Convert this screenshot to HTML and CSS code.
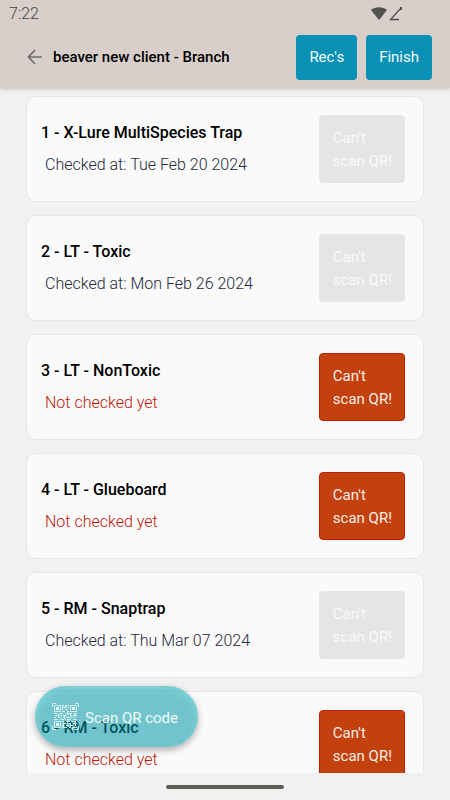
FILE: index.html
```html
<!DOCTYPE html>
<html lang="en">
<head>
<meta charset="utf-8">
<meta name="viewport" content="width=device-width, initial-scale=1">
<title>beaver new client - Branch</title>
<link rel="stylesheet" href="styles.css">
</head>
<body>
<header class="top">
  <div class="status">
    <span class="clock">7:22</span>
    <svg class="signals" width="34" height="16" viewBox="0 0 34 16" aria-hidden="true">
      <path d="M0 4C4 .2 12 .2 16 4L8 14Z" fill="#53514d"/>
      <path d="M29 3 19.500 13.500H28" fill="none" stroke="#53514d" stroke-width="1.300"/>
      <path d="M29 1h2v3h-2z" fill="#53514d"/>
    </svg>
  </div>
  <div class="bar">
    <a class="back" href="#" aria-label="Back">
      <svg width="16" height="16" viewBox="0 0 16 16" aria-hidden="true"><path d="M8 1 1.500 8 8 15M1.500 8H15" fill="none" stroke="#6b6d6b" stroke-width="1.700"/></svg>
    </a>
    <h1 class="title">beaver new client - Branch</h1>
    <button class="action" type="button">Rec's</button>
    <button class="action" type="button">Finish</button>
  </div>
</header>
<main class="list">
  <article class="card">
    <div class="info"><h2 class="name">1 - X-Lure MultiSpecies Trap</h2><p class="state">Checked at: Tue Feb 20 2024</p></div>
    <button class="cant" type="button" disabled>Can't<br>scan QR!</button>
  </article>
  <article class="card">
    <div class="info"><h2 class="name">2 - LT - Toxic</h2><p class="state">Checked at: Mon Feb 26 2024</p></div>
    <button class="cant" type="button" disabled>Can't<br>scan QR!</button>
  </article>
  <article class="card">
    <div class="info"><h2 class="name">3 - LT - NonToxic</h2><p class="state pending">Not checked yet</p></div>
    <button class="cant" type="button">Can't<br>scan QR!</button>
  </article>
  <article class="card">
    <div class="info"><h2 class="name">4 - LT - Glueboard</h2><p class="state pending">Not checked yet</p></div>
    <button class="cant" type="button">Can't<br>scan QR!</button>
  </article>
  <article class="card">
    <div class="info"><h2 class="name">5 - RM - Snaptrap</h2><p class="state">Checked at: Thu Mar 07 2024</p></div>
    <button class="cant" type="button" disabled>Can't<br>scan QR!</button>
  </article>
  <article class="card">
    <div class="info"><h2 class="name">6 - RM - Toxic</h2><p class="state pending">Not checked yet</p></div>
    <button class="cant" type="button">Can't<br>scan QR!</button>
  </article>
</main>
<footer class="gesture"><span class="handle"></span></footer>
<button class="scan" type="button">
  <svg width="27" height="27" viewBox="0 0 27 27" aria-hidden="true">
    <g fill="none" stroke="#e6f6f7" stroke-opacity=".85">
      <path d="M.5 4V.5H4M23 .5h3.500V4M26.500 23v3.500H23M4 26.500H.5V23"/>
      <path d="M2.500 2.500h6v6h-6zM18.500 2.500h6v6h-6zM2.500 18.500h6v6h-6z"/>
      <path d="M10 2.500h2m2 0h3M11 4.500h4m1 0h1M10 6.500h1m2 0h3M10 8.500h3m2 0h2M2 10.500h3m2 0h4m2 0h1m2 0h4m2 0h3M3 12.500h4m1 0h2m1 0h4m3 0h2m1 0h4M2 14.500h2m2 0h3m2 0h2m1 0h4m1 0h2m2 0h1M2 16.500h4m2 0h4m1 0h1m2 0h3m2 0h4M10 18.500h2m2 0h4m1 0h2m1 0h2M11 20.500h4m2 0h2m2 0h4M10 22.500h2m2 0h3m1 0h3m2 0h1M10 24.500h5m2 0h2m2 0h4"/>
      <path d="M10.500 3v4m3-5v3m2 3v4m-3 0v4m-6-5v3m12-3v3m4-3v3m-7 2v4m-4 0v4m7-3v3m5-5v4m-3 1v3"/>
    </g>
    <path d="M4 4h3v3H4zM20 4h3v3h-3zM4 20h3v3H4z" fill="#e6f6f7"/>
  </svg>
  <span class="label">Scan QR code</span>
</button>
</body>
</html>
```

FILE: styles.css
```css
* {
  box-sizing: border-box;
}

body {
  margin: 0;
  height: 100vh;
  display: flex;
  flex-direction: column;
  overflow: hidden;
  background: #f2f1ef;
  color: #000;
  font: 16px/24px Roboto, sans-serif;
}

h1,
h2,
p {
  margin: 0;
}

button {
  font: inherit;
  font-size: 15px;
  cursor: pointer;
}

.top {
  flex: none;
  position: relative;
  background: #d8ceca;
  box-shadow: 0 1px 4px rgba(0, 0, 0, 0.2);
}

.status {
  display: flex;
  align-items: center;
  justify-content: space-between;
  height: 28px;
  padding: 0 45px 0 9px;
}

.clock {
  color: #474543;
  font-weight: 300;
}

.bar {
  display: flex;
  align-items: center;
  gap: 9px;
  height: 60px;
  padding: 0 18px 2px 27px;
}

.back {
  display: flex;
}

.title {
  flex: 1;
  padding-left: 1px;
  font-size: 15px;
  font-weight: 500;
}

.action {
  height: 45px;
  padding: 0 13px;
  border: 0;
  border-radius: 4px;
  background: #0891b5;
  color: #f5fbfc;
}

.list {
  flex: 1;
  min-height: 0;
  overflow: hidden;
  display: flex;
  flex-direction: column;
  gap: 13px;
  padding: 8px 26px 0;
}

.card {
  flex: none;
  display: flex;
  align-items: center;
  justify-content: space-between;
  padding: 18px;
  padding-left: 14px;
  border: 1px solid #e5e7eb;
  border-radius: 10px;
  background: #fafafa;
}

.name {
  font-size: 16px;
  font-weight: 500;
}

.state {
  padding: 8px 4px 0;
  color: #1e293b;
  font-weight: 300;
}

.pending {
  color: #c01808;
}

.cant {
  padding: 11px 12px 9px 13px;
  border: 1px solid #be2006;
  border-radius: 4px;
  background: #c2410c;
  color: #fbeee9;
  line-height: 23px;
  text-align: left;
}

.cant:disabled {
  border-color: #e6e5e3;
  background: #e6e5e3;
  color: #fafafa;
}

.gesture {
  flex: none;
  display: flex;
  align-items: center;
  justify-content: center;
  height: 27px;
}

.handle {
  width: 118px;
  height: 4px;
  border-radius: 2px;
  background: #5c5c59;
}

.scan {
  position: absolute;
  left: 35px;
  bottom: 53px;
  display: flex;
  align-items: center;
  gap: 6px;
  height: 61px;
  padding: 0 20px 0 17px;
  border: 0;
  border-radius: 31px;
  background: rgba(0, 152, 165, 0.55);
  color: #f2fafa;
  box-shadow: 0 3px 7px rgba(0, 0, 0, 0.3), inset 0 4px 8px rgba(150, 240, 245, 0.4);
}

.label {
  padding-top: 2px;
}
```
